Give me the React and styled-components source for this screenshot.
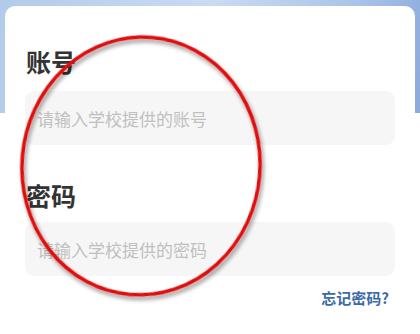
import React from 'react'
import styled, { createGlobalStyle } from 'styled-components'

const GlobalStyle = createGlobalStyle`
  html, body {
    margin: 0;
    padding: 0;
    background: #fff;
    font-family: "Noto Sans CJK SC", "Noto Sans", sans-serif;
  }
`

const Screen = styled.div`
  position: relative;
  width: 420px;
  height: 334px;
  overflow: hidden;
  background: linear-gradient(to bottom, transparent 0, transparent 113px, #fff 113px),
    linear-gradient(100deg, #b3cbea 0%, #c9dbf1 45%, #a9c3e9 75%, #7d9fd6 100%);
`

const Card = styled.div`
  margin: 6px 5px 0;
  height: 340px;
  background: #fff;
  border-radius: 10px;
  padding: 38px 20px 0;
  display: flex;
  flex-direction: column;
`

const Label = styled.div`
  font-size: 25px;
  font-weight: 700;
  color: #333;
  line-height: 34px;
  margin-top: ${p => p.$gap || 0}px;
  padding-left: 1px;
`

const Field = styled.div`
  margin-top: ${p => p.$gap || 12}px;
  height: 54px;
  border-radius: 9px;
  background: #f6f6f6;
  display: flex;
  align-items: center;
  padding: 0 12px;
  font-size: 17px;
  color: #c0c0c0;
`

const Forgot = styled.div`
  align-self: flex-end;
  margin-top: 11px;
  margin-right: 6px;
  font-size: 15px;
  font-weight: 700;
  color: #3b6aa6;
`

const Mark = styled.svg`
  position: absolute;
  left: 0;
  top: 0;
  pointer-events: none;
`

export default function App() {
  return (
    <>
      <GlobalStyle />
      <Screen>
        <Card>
          <Label>账号</Label>
          <Field $gap={13}>请输入学校提供的账号</Field>
          <Label $gap={33}>密码</Label>
          <Field $gap={10}>请输入学校提供的密码</Field>
          <Forgot>忘记密码?</Forgot>
        </Card>
        <Mark width="420" height="334" viewBox="0 0 420 334">
          <defs>
            <filter id="sh" x="-20%" y="-20%" width="140%" height="140%">
              <feDropShadow dx="2" dy="3" stdDeviation="2" floodColor="#000" floodOpacity="0.45" />
            </filter>
          </defs>
          <ellipse
            cx="141"
            cy="166"
            rx="119"
            ry="129"
            transform="rotate(5 141 166)"
            fill="none"
            stroke="#e0100f"
            strokeWidth="3.5"
            filter="url(#sh)"
          />
        </Mark>
      </Screen>
    </>
  )
}
